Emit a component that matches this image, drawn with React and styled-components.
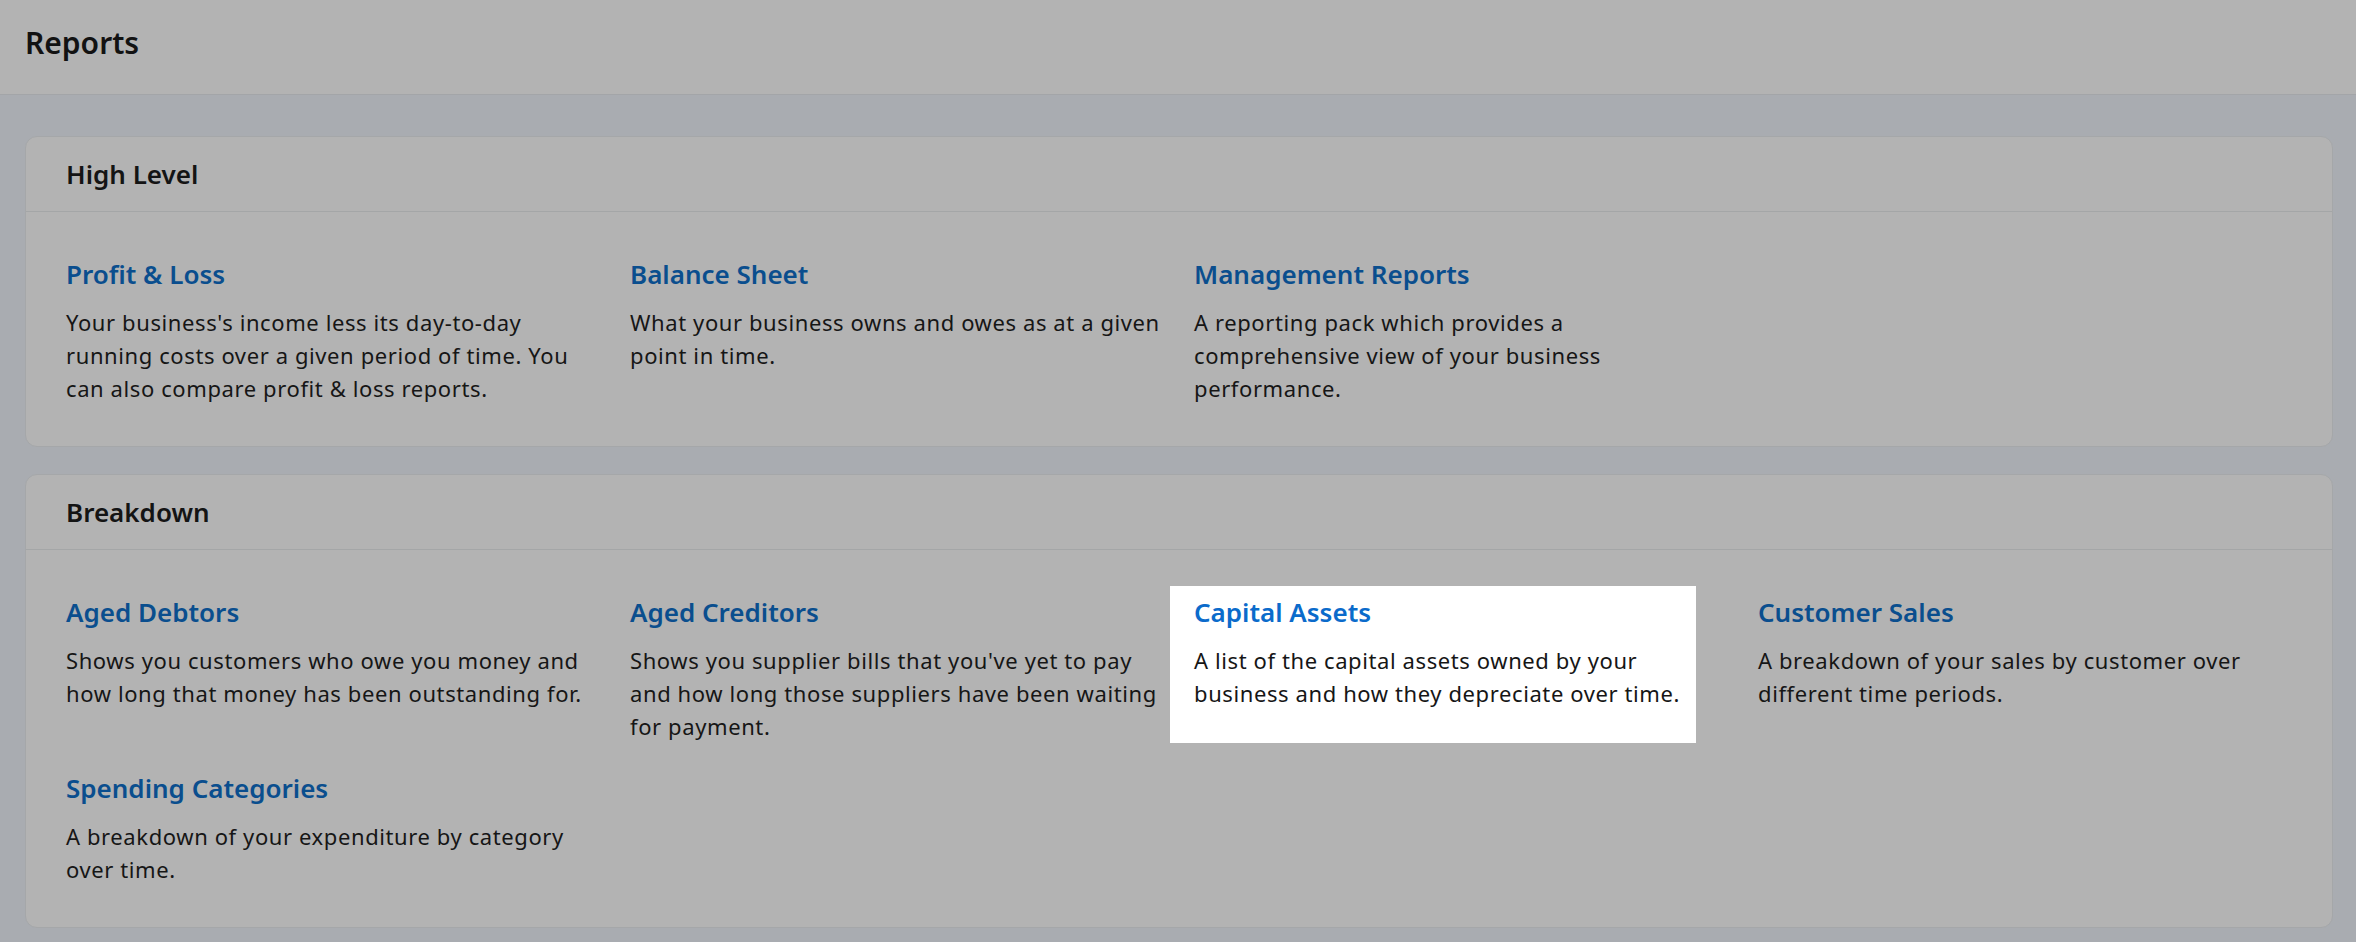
import React from "react";
import styled, { createGlobalStyle } from "styled-components";

const Global = createGlobalStyle`
  html, body { margin: 0; padding: 0; }
  body {
    background: #a9acb1;
    font-family: "Noto Sans", "Open Sans", "Liberation Sans", sans-serif;
    color: #161616;
  }
`;

const Page = styled.div`
  min-height: 942px;
  background: #a9acb1;
`;

const TopBar = styled.header`
  height: 95px;
  box-sizing: border-box;
  display: flex;
  align-items: center;
  padding: 0 0 9px 25px;
  background: #b3b3b3;
  border-bottom: 1px solid #a3a5a8;
`;

const PageTitle = styled.h1`
  margin: 0;
  font-size: 30px;
  font-weight: 600;
  color: #121212;
`;

const Main = styled.main`
  display: flex;
  flex-direction: column;
  gap: 27px;
  padding: 41px 23px 0 25px;
`;

const Card = styled.section`
  background: #b3b3b3;
  border: 1px solid #a5a7a9;
  border-radius: 12px;
`;

const CardHeader = styled.div`
  height: 74px;
  display: flex;
  align-items: center;
  padding-left: 40px;
  border-bottom: 1px solid #a4a6a7;
`;

const CardTitle = styled.h2`
  margin: 0;
  font-size: 26px;
  font-weight: 600;
  color: #141414;
`;

const Grid = styled.div`
  display: grid;
  grid-template-columns: repeat(4, minmax(0, 1fr));
  column-gap: 30px;
  row-gap: 27px;
  padding: 44px 40px 41px;
`;

const Item = styled.a`
  position: relative;
  z-index: 0;
  display: block;
  text-decoration: none;

  ${(p) =>
    p.$active &&
    `
    &::before {
      content: "";
      position: absolute;
      top: -8px;
      bottom: 0;
      left: -24px;
      right: 32px;
      background: #ffffff;
      z-index: -1;
    }
  `}
`;

const ItemTitle = styled.div`
  font-size: 26px;
  line-height: 36px;
  font-weight: 600;
  color: ${(p) => (p.$active ? "#0b6bcb" : "#0a4e8e")};
  margin-bottom: 14px;
`;

const ItemDesc = styled.p`
  margin: 0;
  font-size: 22px;
  line-height: 33px;
  letter-spacing: 0.6px;
  color: #161616;
`;

const sections = [
  {
    title: "High Level",
    items: [
      {
        title: "Profit & Loss",
        desc: "Your business's income less its day-to-day running costs over a given period of time. You can also compare profit & loss reports.",
      },
      {
        title: "Balance Sheet",
        desc: "What your business owns and owes as at a given point in time.",
      },
      {
        title: "Management Reports",
        desc: "A reporting pack which provides a comprehensive view of your business performance.",
      },
    ],
  },
  {
    title: "Breakdown",
    items: [
      {
        title: "Aged Debtors",
        desc: "Shows you customers who owe you money and how long that money has been outstanding for.",
      },
      {
        title: "Aged Creditors",
        desc: "Shows you supplier bills that you've yet to pay and how long those suppliers have been waiting for payment.",
      },
      {
        title: "Capital Assets",
        desc: "A list of the capital assets owned by your business and how they depreciate over time.",
        active: true,
      },
      {
        title: "Customer Sales",
        desc: "A breakdown of your sales by customer over different time periods.",
      },
      {
        title: "Spending Categories",
        desc: "A breakdown of your expenditure by category over time.",
      },
    ],
  },
];

export default function App() {
  return (
    <Page>
      <Global />
      <TopBar>
        <PageTitle>Reports</PageTitle>
      </TopBar>
      <Main>
        {sections.map((s) => (
          <Card key={s.title}>
            <CardHeader>
              <CardTitle>{s.title}</CardTitle>
            </CardHeader>
            <Grid>
              {s.items.map((it) => (
                <Item key={it.title} href="#" $active={it.active}>
                  <ItemTitle $active={it.active}>{it.title}</ItemTitle>
                  <ItemDesc>{it.desc}</ItemDesc>
                </Item>
              ))}
            </Grid>
          </Card>
        ))}
      </Main>
    </Page>
  );
}
